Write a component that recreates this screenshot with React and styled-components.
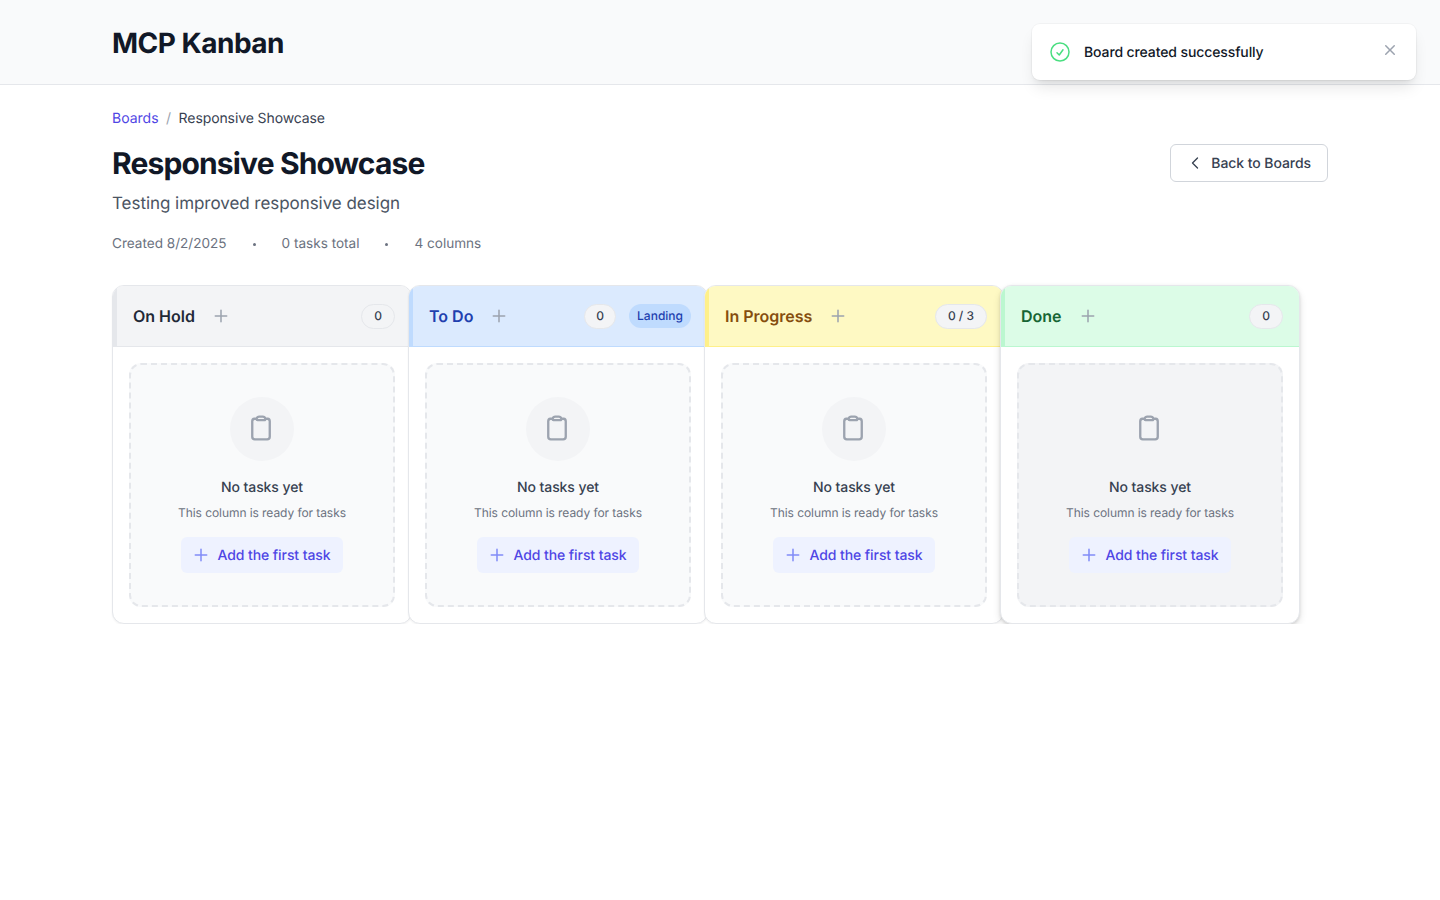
import React from 'react';
import styled, { createGlobalStyle } from 'styled-components';

const Global = createGlobalStyle`
  html, body { margin: 0; padding: 0; background: #fff; }
  body {
    font-family: Inter, "Liberation Sans", sans-serif;
    color: #111827;
    text-rendering: geometricPrecision;
    -webkit-font-smoothing: antialiased;
  }
  button { text-rendering: geometricPrecision; }
  * { box-sizing: border-box; }
`;

const TopBar = styled.header`
  height: 85px;
  background: #f9fafb;
  border-bottom: 1px solid #e5e7eb;
  padding: 0 112px;
  display: flex;
  align-items: center;
`;
const Logo = styled.h1`
  margin: 1px 0 0;
  font-size: 28px;
  line-height: 36px;
  font-weight: 700;
  letter-spacing: -0.5px;
  color: #111827;
`;
const Toast = styled.div`
  position: absolute;
  top: 24px;
  left: 1032px;
  width: 384px;
  height: 56px;
  background: #fff;
  border-radius: 8px;
  box-shadow: 0 10px 15px -3px rgba(0,0,0,.1), 0 4px 6px -4px rgba(0,0,0,.1), 0 0 0 1px rgba(0,0,0,.03);
  display: flex;
  align-items: center;
  padding: 0 16px;
`;
const ToastText = styled.span`
  flex: 1;
  margin: 2px 0 0 12px;
  font-size: 14px;
  font-weight: 500;
  line-height: 20px;
  letter-spacing: -0.11px;
  color: #111827;
`;
const ToastClose = styled.button`
  border: 0;
  background: none;
  padding: 0;
  width: 20px;
  height: 20px;
  color: #9ca3af;
  display: flex;
  margin-top: -4px;
`;
const Main = styled.main`
  padding: 24px 112px 0;
`;
const Crumbs = styled.nav`
  display: flex;
  align-items: center;
  gap: 7.5px;
  font-size: 14px;
  line-height: 20px;
  height: 20px;
`;
const CrumbLink = styled.a`
  color: #4f46e5;
`;
const CrumbSep = styled.span`
  color: #9ca3af;
`;
const CrumbCurrent = styled.span`
  color: #374151;
  letter-spacing: -0.1px;
`;
const TitleRow = styled.div`
  display: flex;
  justify-content: space-between;
  align-items: flex-start;
  margin-top: 15px;
`;
const Title = styled.h2`
  margin: 2px 0 0;
  font-size: 30px;
  line-height: 36px;
  font-weight: 700;
  letter-spacing: -0.86px;
  color: #111827;
`;
const Subtitle = styled.p`
  margin: 8px 0 0;
  font-size: 17px;
  line-height: 28px;
  letter-spacing: -0.05px;
  color: #4b5563;
`;
const Meta = styled.div`
  display: flex;
  align-items: center;
  margin-top: 16px;
  font-size: 13.57px;
  line-height: 20px;
  color: #6b7280;
  height: 20px;
`;
const MetaDot = styled.span`
  width: 3px;
  height: 3px;
  border-radius: 50%;
  background: #6b7280;
  margin: 0 26px;
`;
const BackButton = styled.button`
  display: flex;
  align-items: center;
  height: 38px;
  padding: 0 16px;
  gap: 8px;
  background: #fff;
  border: 1px solid #d1d5db;
  border-radius: 6px;
  font: 500 14px/20px Inter, sans-serif;
  letter-spacing: -0.07px;
  color: #374151;
`;
const ButtonLabel = styled.span`
  margin-top: 2px;
`;
const Board = styled.section`
  display: flex;
  margin-top: 31px;
  width: 1188px;
`;
const Column = styled.article`
  position: relative;
  width: 300px;
  flex: none;
  height: 339px;
  margin-left: ${p => (p.$first ? 0 : '-4px')};
  background: #fff;
  border: 1px solid #e5e7eb;
  border-radius: 12px;
  overflow: hidden;
  box-shadow: ${p => (p.$raised ? '0 4px 8px -1px rgba(0,0,0,.14), 0 1px 3px rgba(0,0,0,.1)' : '0 1px 2px rgba(0,0,0,.05)')};
`;
const ColumnHead = styled.div`
  height: 61px;
  display: flex;
  align-items: center;
  padding: 0 16px;
  background: ${p => p.$bg};
  border-left: 4px solid ${p => p.$accent};
  border-bottom: 1px solid ${p => p.$line};
`;
const ColumnName = styled.h3`
  margin: 0;
  font-size: 16px;
  line-height: 24px;
  font-weight: 600;
  color: ${p => p.$color};
`;
const HeadAdd = styled.button`
  border: 0;
  background: none;
  padding: 0;
  margin-left: 16px;
  width: 20px;
  height: 20px;
  color: #9ca3af;
  display: flex;
  align-items: center;
  justify-content: center;
`;
const Spacer = styled.div`
  flex: 1;
`;
const Count = styled.span`
  height: 25px;
  padding: 0 ${p => (p.$compact ? 0 : 12)}px 1px;
  width: ${p => (p.$compact ? '32px' : 'auto')};
  border-radius: 999px;
  background: #f3f4f6;
  border: 1px solid #e5e7eb;
  display: flex;
  align-items: center;
  justify-content: center;
  font-size: 12px;
  font-weight: 500;
  color: #374151;
  white-space: nowrap;
`;
const Tag = styled.span`
  margin-left: 13px;
  height: 24px;
  padding: 0 8px 1px;
  border-radius: 999px;
  background: #bfdbfe;
  color: #1e40af;
  font-size: 12px;
  font-weight: 500;
  display: flex;
  align-items: center;
`;
const ColumnBody = styled.div`
  padding: 16px;
`;
const Empty = styled.div`
  height: 244px;
  border: 2px dashed #e5e7eb;
  border-radius: 12px;
  background: ${p => (p.$muted ? '#f3f4f6' : '#f9fafb')};
  display: flex;
  flex-direction: column;
  align-items: center;
  padding-top: 32px;
`;
const IconDisc = styled.div`
  width: 64px;
  height: 64px;
  border-radius: 50%;
  background: #f3f4f6;
  color: #9ca3af;
  display: flex;
  align-items: center;
  justify-content: center;
  svg { margin: -2px 2px 0 0; }
`;
const EmptyTitle = styled.p`
  margin: 17px 0 0;
  font-size: 14px;
  line-height: 20px;
  font-weight: 500;
  letter-spacing: -0.08px;
  color: #374151;
`;
const EmptyHint = styled.p`
  margin: 7px 0 0;
  font-size: 12px;
  line-height: 16px;
  letter-spacing: -0.07px;
  color: #6b7280;
`;
const AddTask = styled.button`
  margin-top: 16px;
  height: 36px;
  padding: 0 12px;
  display: flex;
  align-items: center;
  gap: 8px;
  border: 0;
  border-radius: 6px;
  background: #eef2ff;
  color: #4f46e5;
  font: 500 14px/20px Inter, sans-serif;
  letter-spacing: -0.08px;
  svg { color: #818cf8; }
`;

const Plus = () => (
  <svg width="16" height="16" viewBox="1.5 1.5 21 21" fill="none" stroke="currentColor" strokeWidth="2" strokeLinecap="round">
    <path d="M12 4.5v15M4.5 12h15" />
  </svg>
);
const Clipboard = () => (
  <svg width="28" height="28" viewBox="0 0 24 24" fill="none" stroke="currentColor" strokeWidth="2" strokeLinecap="round" strokeLinejoin="round">
    <path d="M15.666 3.888A2.25 2.25 0 0 0 13.5 2.25h-3c-1.03 0-1.9.693-2.166 1.638m7.332 0c.055.194.084.4.084.612v0a.75.75 0 0 1-.75.75H9a.75.75 0 0 1-.75-.75v0c0-.212.03-.418.084-.612m7.332 0c.646.049 1.288.11 1.927.184 1.1.128 1.907 1.077 1.907 2.185V19.5a2.25 2.25 0 0 1-2.25 2.25H6.75A2.25 2.25 0 0 1 4.5 19.5V6.257c0-1.108.806-2.057 1.907-2.185a48.208 48.208 0 0 1 1.927-.184" />
  </svg>
);

const columns = [
  { name: 'On Hold', count: '0', bg: '#f3f4f6', accent: '#e5e7eb', line: '#e5e7eb', color: '#1f2937' },
  { name: 'To Do', count: '0', tag: 'Landing', bg: '#dbeafe', accent: '#bfdbfe', line: '#bfdbfe', color: '#1e40af' },
  { name: 'In Progress', count: '0 / 3', bg: '#fef9c3', accent: '#fef08a', line: '#fef08a', color: '#854d0e' },
  { name: 'Done', count: '0', bg: '#dcfce7', accent: '#bbf7d0', line: '#bbf7d0', color: '#166534', raised: true, muted: true },
];

export default function App() {
  return (
    <>
      <Global />
      <TopBar>
        <Logo>MCP Kanban</Logo>
      </TopBar>
      <Toast>
        <svg width="24" height="24" viewBox="0 0 24 24" fill="none" stroke="#4ade80" strokeWidth="1.5" strokeLinecap="round" strokeLinejoin="round">
          <path d="M9 12.75 11.25 15 15 9.75M21 12a9 9 0 1 1-18 0 9 9 0 0 1 18 0Z" />
        </svg>
        <ToastText>Board created successfully</ToastText>
        <ToastClose aria-label="Close">
          <svg width="20" height="20" viewBox="0 0 20 20" fill="currentColor">
            <path d="M6.28 5.22a.75.75 0 0 0-1.06 1.06L8.94 10l-3.72 3.72a.75.75 0 1 0 1.06 1.06L10 11.06l3.72 3.72a.75.75 0 1 0 1.06-1.06L11.06 10l3.72-3.72a.75.75 0 0 0-1.06-1.06L10 8.94 6.28 5.22Z" />
          </svg>
        </ToastClose>
      </Toast>
      <Main>
        <Crumbs>
          <CrumbLink>Boards</CrumbLink>
          <CrumbSep>/</CrumbSep>
          <CrumbCurrent>Responsive Showcase</CrumbCurrent>
        </Crumbs>
        <TitleRow>
          <div>
            <Title>Responsive Showcase</Title>
            <Subtitle>Testing improved responsive design</Subtitle>
          </div>
          <BackButton>
            <svg width="16" height="16" viewBox="0 0 24 24" fill="none" stroke="currentColor" strokeWidth="2" strokeLinecap="round" strokeLinejoin="round">
              <path d="M15.75 19.5 8.25 12l7.5-7.5" />
            </svg>
            <ButtonLabel>Back to Boards</ButtonLabel>
          </BackButton>
        </TitleRow>
        <Meta>
          <span>Created 8/2/2025</span>
          <MetaDot />
          <span>0 tasks total</span>
          <MetaDot />
          <span>4 columns</span>
        </Meta>
        <Board>
          {columns.map((c, i) => (
            <Column key={c.name} $first={i === 0} $raised={c.raised}>
              <ColumnHead $bg={c.bg} $accent={c.accent} $line={c.line}>
                <ColumnName $color={c.color}>{c.name}</ColumnName>
                <HeadAdd aria-label={`Add to ${c.name}`}><Plus /></HeadAdd>
                <Spacer />
                <Count $compact={!!c.tag}>{c.count}</Count>
                {c.tag && <Tag>{c.tag}</Tag>}
              </ColumnHead>
              <ColumnBody>
                <Empty $muted={c.muted}>
                  <IconDisc><Clipboard /></IconDisc>
                  <EmptyTitle>No tasks yet</EmptyTitle>
                  <EmptyHint>This column is ready for tasks</EmptyHint>
                  <AddTask><Plus /><ButtonLabel>Add the first task</ButtonLabel></AddTask>
                </Empty>
              </ColumnBody>
            </Column>
          ))}
        </Board>
      </Main>
    </>
  );
}
